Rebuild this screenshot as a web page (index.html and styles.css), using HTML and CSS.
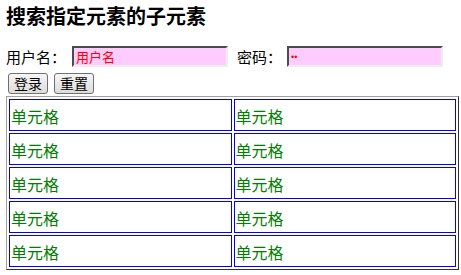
FILE: index.html
```html
<!DOCTYPE html>
<html lang="zh-CN">
<head>
    <meta charset="UTF-8">
    <title>搜索指定元素的子元素</title>
    <link rel="stylesheet" href="styles.css">
</head>
<body>
    <h3 class="title">搜索指定元素的子元素</h3>

    <!-- Login form -->
    <form class="login">
        <div class="login-row">
            <label class="field-label">用户名：</label>
            <input class="field" type="text" value="用户名">
            <label class="field-label pass-label">密码：</label>
            <input class="field pass" type="password" value="ab">
        </div>
        <div class="login-buttons">
            <button type="button" class="btn">登录</button>
            <button type="reset" class="btn">重置</button>
        </div>
    </form>

    <!-- Cells -->
    <table class="grid">
        <tr><td>单元格</td><td>单元格</td></tr>
        <tr><td>单元格</td><td>单元格</td></tr>
        <tr><td>单元格</td><td>单元格</td></tr>
        <tr><td>单元格</td><td>单元格</td></tr>
        <tr><td>单元格</td><td>单元格</td></tr>
    </table>
</body>
</html>
```

FILE: styles.css
```css
body {
    margin: 0;
    padding: 4px 6px 0;
    font-family: "Noto Sans CJK SC", sans-serif;
    color: #000;
    background: #fff;
}

.title {
    font-size: 20px;
    font-weight: bold;
    line-height: 24px;
    margin: 0 0 17px;
}

/* Login form */
.login-row {
    display: flex;
    align-items: center;
    height: 23px;
    font-size: 15px;
}

.field-label {
    width: 66px;
}

.pass-label {
    width: 50px;
    margin-left: 9px;
}

.field {
    box-sizing: border-box;
    width: 156px;
    height: 21px;
    padding: 0 2px;
    border: 2px inset #a0a0a0;
    border-right-color: #eee;
    border-bottom-color: #eee;
    background: #ffccff;
    color: #f00;
    font-family: "Noto Sans CJK SC", sans-serif;
    font-size: 13px;
}

.pass {
    font-family: "Liberation Sans", sans-serif;
    font-size: 9px;
    letter-spacing: 0;
}

.login-buttons {
    display: flex;
    gap: 6px;
    padding: 5px 0 0 2px;
}

.btn {
    box-sizing: border-box;
    height: 21px;
    padding: 0 5px;
    font-family: "Noto Sans CJK SC", sans-serif;
    font-size: 14px;
    line-height: 17px;
    border: 1px solid #707070;
    border-radius: 3px;
    background: linear-gradient(#f6f6f6, #dcdcdc);
    color: #000;
}

/* Table */
.grid {
    width: 453px;
    margin-top: 2px;
    border: 1px solid;
    border-color: #a0a0a0 #333 #333 #a0a0a0;
    border-spacing: 2px;
}

.grid td {
    box-sizing: border-box;
    height: 32px;
    padding: 2px 1px 0;
    border: 1px solid #0000ff;
    color: #008000;
    font-size: 16px;
}
```
